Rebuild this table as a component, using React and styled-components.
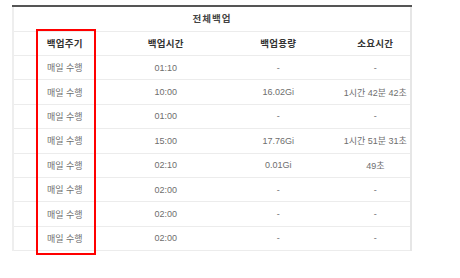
import React from "react";
import styled, { createGlobalStyle } from "styled-components";

const Global = createGlobalStyle`
  html, body { margin: 0; padding: 0; background: #fff; }
  body { font-family: "Liberation Sans", "Noto Sans CJK KR", sans-serif; }
`;

const Page = styled.div`
  padding: 5px 0 0 12px;
  width: 460px;
  height: 278px;
  box-sizing: border-box;
`;

const Frame = styled.div`
  position: relative;
  width: 400px;
  border-top: 2px solid #555;
`;

const Table = styled.table`
  width: 400px;
  border-collapse: collapse;
  table-layout: fixed;
  border-left: 2px solid #eeeeee;
  border-right: 2px solid #e6e6e6;
  font-size: 9px;
  font-family: "Liberation Sans", "Noto Sans CJK KR", sans-serif;
`;

const Row = styled.tr`
  height: ${(p) => p.$h}px;
  border-bottom: 1px solid #ececec;
`;

const Cell = styled.td`
  padding: 0;
  text-align: center;
  vertical-align: middle;
  color: ${(p) => (p.$head ? "#333" : "#6e6e6e")};
  font-weight: ${(p) => (p.$head ? 700 : 400)};
  font-size: ${(p) => (p.$head ? "9.5px" : "9px")};
  letter-spacing: ${(p) => (p.$head ? "0.3px" : "0")};
  white-space: nowrap;
`;

const Title = styled(Cell)`
  color: #444;
  letter-spacing: 1px;
  padding-bottom: 2px;
`;

const Highlight = styled.div`
  position: absolute;
  left: 24px;
  top: 22px;
  width: 56px;
  height: 222px;
  border: 2px solid #ff0000;
  pointer-events: none;
`;

const rows = [
  ["01:10", "-", "-"],
  ["10:00", "16.02Gi", "1시간 42분 42초"],
  ["01:00", "-", "-"],
  ["15:00", "17.76Gi", "1시간 51분 31초"],
  ["02:10", "0.01Gi", "49초"],
  ["02:00", "-", "-"],
  ["02:00", "-", "-"],
  ["02:00", "-", "-"],
];

export default function App() {
  return (
    <>
      <Global />
      <Page>
        <Frame>
          <Table>
            <colgroup>
              <col style={{ width: 102 }} />
              <col style={{ width: 100 }} />
              <col style={{ width: 124 }} />
              <col style={{ width: 70 }} />
            </colgroup>
            <tbody>
              <Row $h={24}>
                <Title colSpan={4} $head>
                  전체백업
                </Title>
              </Row>
              <Row $h={24.5}>
                <Cell $head>백업주기</Cell>
                <Cell $head>백업시간</Cell>
                <Cell $head>백업용량</Cell>
                <Cell $head>소요시간</Cell>
              </Row>
              {rows.map((r, i) => (
                <Row key={i} $h={24.4}>
                  <Cell>매일 수행</Cell>
                  <Cell>{r[0]}</Cell>
                  <Cell>{r[1]}</Cell>
                  <Cell>{r[2]}</Cell>
                </Row>
              ))}
            </tbody>
          </Table>
          <Highlight />
        </Frame>
      </Page>
    </>
  );
}
